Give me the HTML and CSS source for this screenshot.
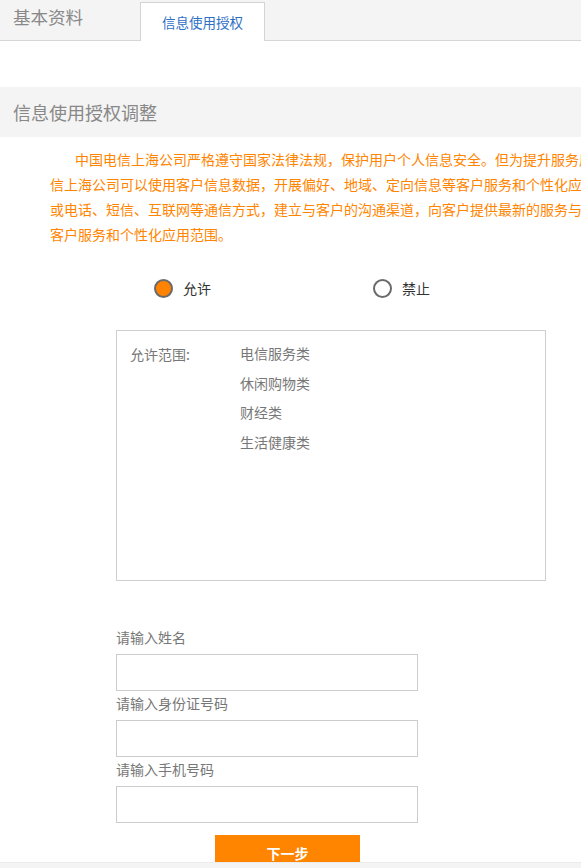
FILE: index.html
```html
<!DOCTYPE html>
<html lang="zh-CN">
<head>
<meta charset="utf-8">
<title>信息使用授权</title>
<link rel="stylesheet" href="styles.css">
</head>
<body>
<div class="tabs">
  <div class="tab tab-plain">基本资料</div>
  <div class="tab tab-active">信息使用授权</div>
</div>

<h2 class="heading">信息使用授权调整</h2>

<p class="notice">中国电信上海公司严格遵守国家法律法规，保护用户个人信息安全。但为提升服务质量，中国电<br>信上海公司可以使用客户信息数据，开展偏好、地域、定向信息等客户服务和个性化应用，通过信函<br>或电话、短信、互联网等通信方式，建立与客户的沟通渠道，向客户提供最新的服务与产品信息。您可调整<br>客户服务和个性化应用范围。</p>

<div class="radios">
  <label class="radio-item radio-first"><span class="radio checked"></span><span class="radio-text">允许</span></label>
  <label class="radio-item"><span class="radio"></span><span class="radio-text">禁止</span></label>
</div>

<div class="scope">
  <div class="scope-label">允许范围:</div>
  <ul class="scope-list">
    <li>电信服务类</li>
    <li>休闲购物类</li>
    <li>财经类</li>
    <li>生活健康类</li>
  </ul>
</div>

<form class="form">
  <div class="field-label">请输入姓名</div>
  <div class="input"></div>
  <div class="field-label">请输入身份证号码</div>
  <div class="input"></div>
  <div class="field-label">请输入手机号码</div>
  <div class="input"></div>
  <div class="actions"><button type="button" class="btn">下一步</button></div>
</form>

<div class="footer"></div>
</body>
</html>
```

FILE: styles.css
```css
html, body {
  margin: 0;
  padding: 0;
  overflow: hidden;
  height: 100%;
}
body {
  font-family: "Noto Sans CJK SC", "Noto Sans", sans-serif;
  background: #fff;
  color: #333;
}
.tabs {
  display: flex;
  align-items: flex-end;
  height: 40px;
  background: #f4f4f4;
  border-bottom: 1px solid #d6d6d6;
}
.tab-plain {
  align-self: flex-start;
  width: 127px;
  padding-left: 13px;
  font-size: 17.5px;
  line-height: 34px;
  color: #888;
}
.tab-active {
  box-sizing: border-box;
  width: 125px;
  height: 39px;
  margin-bottom: -1px;
  background: #fff;
  border: 1px solid #d4d4d4;
  border-bottom: none;
  display: flex;
  align-items: center;
  justify-content: center;
  font-size: 13.5px;
  color: #2e6fc6;
}
.heading {
  margin: 46px 0 0;
  height: 50px;
  line-height: 50px;
  padding-left: 13px;
  background: #f4f4f4;
  font-size: 18px;
  font-weight: normal;
  color: #888;
}
.notice {
  margin: 10px 0 0;
  padding-left: 50px;
  font-size: 14px;
  line-height: 25px;
  color: #ff8500;
  text-indent: 25px;
  white-space: nowrap;
  overflow: hidden;
}
.radios {
  display: flex;
  align-items: center;
  margin-top: 31px;
  padding-left: 154px;
  height: 20px;
}
.radio-item {
  display: flex;
  align-items: center;
  font-size: 14px;
  color: #333;
}
.radio-first {
  width: 219px;
}
.radio {
  box-sizing: border-box;
  width: 19px;
  height: 19px;
  border-radius: 50%;
  border: 2px solid #6a6a6a;
  background: #fff;
}
.radio.checked {
  background: #ff8200;
}
.radio-text {
  margin-left: 10px;
}
.scope {
  box-sizing: border-box;
  display: flex;
  margin: 32px 0 0 116px;
  width: 430px;
  height: 251px;
  border: 1px solid #cfcfcf;
  padding: 8px 0 0 13px;
  font-size: 14px;
  color: #777;
}
.scope-label {
  width: 110px;
  line-height: 30px;
}
.scope-list {
  list-style: none;
  margin: 0;
  padding: 0;
  line-height: 29.7px;
}
.form {
  margin: 44px 0 0 116px;
}
.field-label {
  font-size: 14px;
  line-height: 24px;
  color: #777;
  margin-bottom: 5px;
}
.input {
  box-sizing: border-box;
  width: 302px;
  height: 37px;
  border: 1px solid #cccccc;
  background: #fff;
}
.actions {
  margin: 12px 0 0 99px;
}
.btn {
  display: block;
  width: 145px;
  height: 36px;
  border: none;
  background: #ff8400;
  color: #fff;
  font-family: "Noto Sans CJK SC", sans-serif;
  font-size: 14px;
  font-weight: bold;
  padding: 0;
}
.footer {
  position: fixed;
  left: 0;
  right: 0;
  bottom: 0;
  height: 5px;
  background: #f4f4f4;
  border-top: 1px solid #ececec;
}
```
